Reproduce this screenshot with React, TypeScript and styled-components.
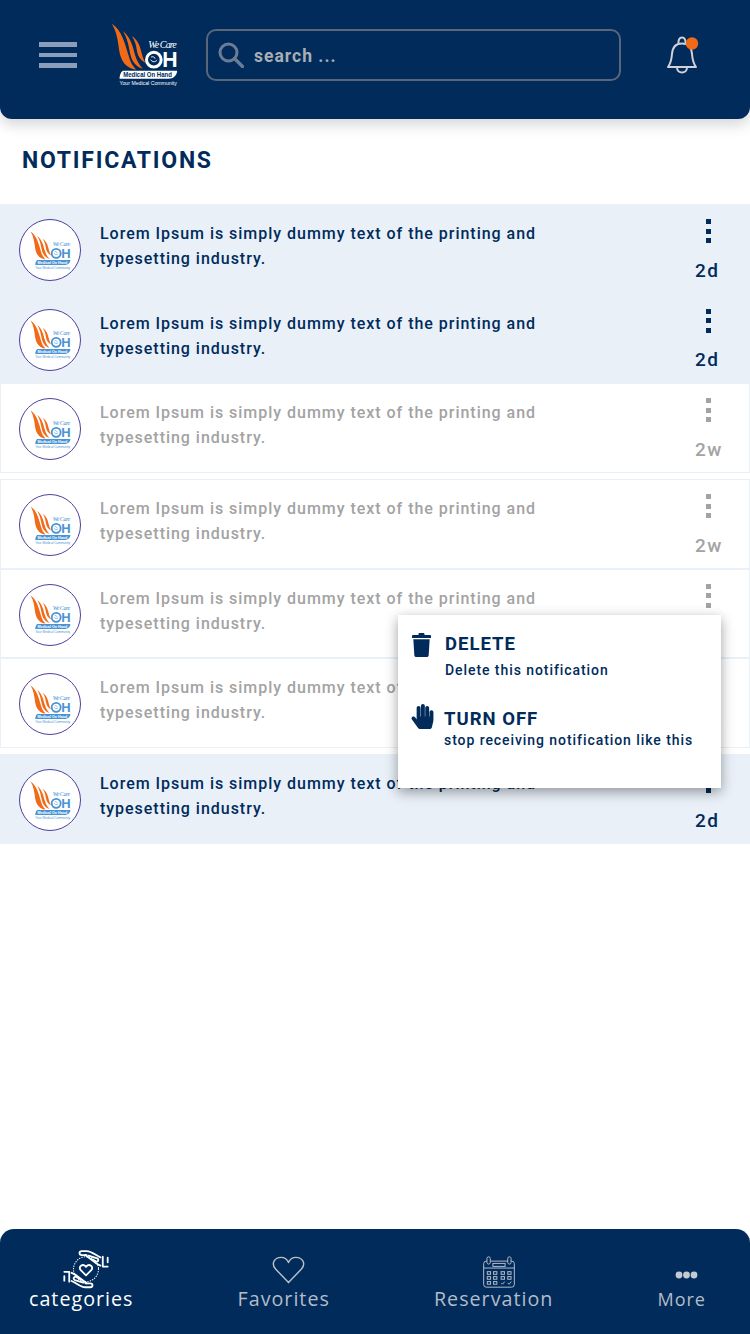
import React from "react";
import styled, { createGlobalStyle } from "styled-components";
import { FaHandPaper } from "react-icons/fa";

const NAVY = "#002B5B";
const TINT = "#E9F0F8";
const MUTED = "#A3A3A3";
const ORANGE = "#F06A17";
const DIN = '"Roboto", "Liberation Sans", sans-serif';
const HUMANIST = '"Open Sans", "Noto Sans", sans-serif';

const Global = createGlobalStyle`
  html, body { margin: 0; padding: 0; background: #fff; }
  * { box-sizing: border-box; }
`;

const Page = styled.div`
  width: 750px;
  height: 1334px;
  display: flex;
  flex-direction: column;
  overflow: hidden;
  font-family: ${DIN};
  background: #fff;
`;

const Header = styled.header`
  flex: none;
  height: 119px;
  padding: 0 0 9px 39px;
  display: flex;
  align-items: center;
  background: ${NAVY};
  border-radius: 0 0 12px 12px;
  box-shadow: 0 6px 14px rgba(0, 0, 0, 0.16);
  position: relative;
`;

const Burger = styled.div`
  width: 38px;
  display: flex;
  flex-direction: column;
  gap: 5.5px;
`;

const BurgerBar = styled.span`
  display: block;
  height: 4.7px;
  background: #8a9dba;
`;

const HeaderLogo = styled.div`
  margin-left: 34px;
  width: 67px;
  height: 64px;
  display: flex;
`;

const SearchBox = styled.div`
  margin-left: 28px;
  width: 415px;
  height: 52px;
  padding-left: 10px;
  display: flex;
  align-items: center;
  gap: 10px;
  border: 2px solid #596779;
  border-radius: 10px;
`;

const SearchText = styled.span`
  margin-top: 1px;
  font-size: 17.5px;
  font-weight: 700;
  letter-spacing: 1px;
  color: #a9aeb5;
`;

const BellWrap = styled.div`
  margin-left: 46px;
  display: flex;
`;

const Title = styled.h1`
  flex: none;
  height: 85px;
  margin: 0;
  padding: 26px 0 0 22px;
  font-size: 23px;
  line-height: 32px;
  font-weight: 700;
  letter-spacing: 1.75px;
  color: ${NAVY};
`;

const List = styled.main`
  flex: 1;
  position: relative;
  display: flex;
  flex-direction: column;
`;

const Row = styled.article<{ $unread?: boolean; $gap?: boolean }>`
  flex: none;
  height: 89.7px;
  margin-top: ${(p) => (p.$gap ? "6px" : "0")};
  display: flex;
  align-items: flex-start;
  background: ${(p) => (p.$unread ? TINT : "#fff")};
  border: ${(p) => (p.$unread ? "none" : `1px solid ${TINT}`)};
  color: ${(p) => (p.$unread ? NAVY : MUTED)};
  padding-top: ${(p) => (p.$unread ? "15px" : "14px")};
  padding-left: ${(p) => (p.$unread ? "19px" : "18px")};
`;

const Avatar = styled.div`
  flex: none;
  width: 62px;
  height: 62px;
  border-radius: 50%;
  border: 1px solid #4d3f9f;
  background: #fff;
  display: flex;
  align-items: center;
  justify-content: center;
`;

const Message = styled.p`
  flex: none;
  width: 450px;
  margin: 2px 0 0 19px;
  font-size: 16px;
  line-height: 25px;
  letter-spacing: 0.97px;
  font-weight: 500;
`;

const Meta = styled.div`
  margin-left: 145px;
  display: flex;
  flex-direction: column;
  align-items: flex-start;
`;

const Dots = styled.div`
  margin-left: 11px;
  display: flex;
  flex-direction: column;
  gap: 4.5px;
`;

const Dot = styled.span`
  display: block;
  width: 5px;
  height: 5px;
  background: currentColor;
`;

const Age = styled.span`
  margin-top: 14.5px;
  font-size: 19px;
  line-height: 26px;
  font-weight: 500;
  letter-spacing: 1.5px;
`;

const Menu = styled.aside`
  position: absolute;
  left: 398px;
  top: 411px;
  width: 323px;
  height: 173px;
  padding: 17px 12px 0 12px;
  background: #fff;
  box-shadow: 0 4px 12px rgba(0, 0, 0, 0.38);
  display: flex;
  flex-direction: column;
  gap: 28px;
  color: ${NAVY};
`;

const MenuItem = styled.div<{ $tight?: boolean }>`
  display: flex;
  align-items: flex-start;
  gap: ${(p) => (p.$tight ? "9px" : "14px")};
  margin-left: ${(p) => (p.$tight ? "0" : "2px")};
`;

const MenuIcon = styled.div<{ $top: number }>`
  flex: none;
  display: flex;
  margin-top: ${(p) => p.$top}px;
`;

const MenuText = styled.div<{ $tight?: boolean }>`
  display: flex;
  flex-direction: column;
  gap: ${(p) => (p.$tight ? "0" : "5px")};
`;

const MenuTitle = styled.strong`
  font-size: 18.5px;
  line-height: 24px;
  font-weight: 700;
  letter-spacing: 1px;
`;

const MenuHint = styled.span`
  font-size: 14px;
  line-height: 18px;
  font-weight: 500;
  letter-spacing: 0.93px;
  white-space: nowrap;
`;

const TabBar = styled.nav`
  flex: none;
  height: 105px;
  padding: 22px 44px 0 29px;
  display: flex;
  justify-content: space-between;
  align-items: flex-start;
  background: ${NAVY};
  border-radius: 14px 14px 0 0;
`;

const Tab = styled.div<{ $active?: boolean }>`
  display: flex;
  flex-direction: column;
  align-items: center;
  color: ${(p) => (p.$active ? "#fff" : "#b4bcc7")};
`;

const TabIcon = styled.div<{ $lift?: number }>`
  height: 38px;
  margin-left: 10px;
  padding-bottom: ${(p) => p.$lift ?? 0}px;
  display: flex;
  align-items: flex-end;
`;

const TabLabel = styled.span<{ $small?: boolean }>`
  font-family: ${HUMANIST};
  font-size: ${(p) => (p.$small ? "18px" : "19.7px")};
  line-height: 20px;
  letter-spacing: 1px;
  white-space: nowrap;
`;

const Logo = ({ onNavy, width, height }: { onNavy?: boolean; width: number; height: number }) => {
  const ink = onNavy ? "#ffffff" : "#4a93d4";
  const pillText = onNavy ? NAVY : "#ffffff";
  return (
    <svg width={width} height={height} viewBox="333 68 200 192">
      <g fill={ORANGE}>
        <path d="M335 70C365 90 375 130 385 165C390 185 398 198 408 208C380 205 362 185 357 150C353 120 350 95 335 70Z" />
        <path d="M368 92C392 110 398 140 405 165C410 182 418 195 428 205C410 200 395 185 390 160C385 135 382 115 368 92Z" />
        <path d="M395 107C415 120 420 140 425 160C428 172 432 180 436 188C420 180 412 165 410 150C408 135 405 122 395 107Z" />
      </g>
      <text x="444" y="144" fontFamily='"Liberation Serif", serif' fontStyle="italic" fontSize="30" fill={ink} textLength="86" lengthAdjust="spacing">
        We Care
      </text>
      <circle cx="461" cy="178" r="22" fill="none" stroke={ink} strokeWidth="9" />
      <path d="M451 178c6 8 14 8 20 1M453 170c6-2 10 0 12 5" fill="none" stroke={ink} strokeWidth="3" />
      <text x="486" y="201" fontFamily='"Liberation Sans", sans-serif' fontWeight="700" fontSize="64" fill={ink} textLength="46" lengthAdjust="spacingAndGlyphs">
        H
      </text>
      <path d="M368 211H531C530 225 520 235 505 235H358C358 225 362 215 368 211Z" fill={ink} />
      <text x="369" y="229" fontFamily='"Liberation Sans", sans-serif' fontWeight="700" fontSize="19" fill={pillText} textLength="146" lengthAdjust="spacingAndGlyphs">
        Medical On Hand
      </text>
      <text x="358" y="253" fontFamily='"Liberation Sans", sans-serif' fontSize="14" fill={ink} textLength="172" lengthAdjust="spacingAndGlyphs">
        Your Medical Community
      </text>
    </svg>
  );
};

const SearchIcon = () => (
  <svg width="26" height="26" viewBox="0 0 26 26" fill="none" stroke="#6b7d94">
    <circle cx="10.5" cy="10.5" r="8.5" strokeWidth="3" />
    <path d="M16.5 16.5L24.5 24.5" strokeWidth="3.4" strokeLinecap="round" />
  </svg>
);

const BellIcon = () => (
  <svg width="32" height="38" viewBox="0 0 32 38" fill="none" stroke="#cfd2d6" strokeWidth="2">
    <path d="M1 31H29C26 27 25.5 24 25 18C24.5 11 21 7.5 15 7.5C9 7.5 5.5 11 5 18C4.5 24 4 27 1 31Z" strokeLinejoin="round" />
    <path d="M11.5 8C11 4 12.5 1.5 15 1.5C17.5 1.5 19 4 18.5 8" />
    <path d="M10 31.5C10 38 20 38 20 31.5" />
    <circle cx="25" cy="7.5" r="6.2" fill={ORANGE} stroke="none" />
  </svg>
);

const TrashIcon = () => (
  <svg width="19" height="24" viewBox="0 0 19 24" fill={NAVY}>
    <path d="M6.5 1.2C6.5.5 7 0 7.7 0h3.6c.7 0 1.2.5 1.2 1.2V2h5.6c.5 0 .9.4.9.9V5H0V2.9C0 2.4.4 2 .9 2h5.6z" />
    <path d="M1.3 6.2h16.4L16.7 22.2c-.1 1-.9 1.8-2 1.8H4.3c-1.1 0-1.9-.8-2-1.8z" />
  </svg>
);

const HandsIcon = () => (
  <svg width="46" height="39" viewBox="190 95 140 118" fill="none" stroke="#fff" strokeLinejoin="round" strokeLinecap="round">
    <circle cx="260" cy="153" r="38" strokeWidth="3.5" strokeDasharray="1 6.5" />
    <path d="M260 172L244 156C235 145 250 134 260 146C270 134 285 145 276 156Z" strokeWidth="5.5" />
    {[0, 180].map((a) => (
      <g key={a} transform={`rotate(${a} 260 153)`} strokeWidth="5.5">
        <path d="M304 117C290 112 278 98 262 98H247C238 98 238 110 247 110H262" />
        <path d="M258 110C268 118 282 128 292 136C296 139 304 142 304 142" />
        <path d="M268 112L294 120C301 124 296 133 289 129L276 122" />
        <path d="M311 115V145H326" />
        <path d="M326 118V132" />
      </g>
    ))}
  </svg>
);

const HeartIcon = () => (
  <svg width="33" height="28" viewBox="820 106 102 86" fill="none" stroke="#b9bfc8" strokeWidth="4.5" strokeLinejoin="round">
    <path d="M871 188L831 146C815 127 830 110 848 110C860 110 868 118 871 126C874 118 882 110 894 110C912 110 927 127 911 146Z" />
  </svg>
);

const CalendarIcon = () => {
  const cols = [343, 362, 385, 405];
  const rows = [158, 173, 188];
  return (
    <svg width="32" height="32" viewBox="325 107 97 96" fill="none" stroke="#b4bcc7" strokeWidth="3">
      <rect x="327" y="122" width="93" height="79" rx="8" />
      <path d="M327 143H420" />
      <rect x="337" y="109" width="10" height="22" rx="5" fill={NAVY} />
      <rect x="400" y="109" width="10" height="22" rx="5" fill={NAVY} />
      <rect x="355" y="129" width="37" height="9" />
      {rows.map((y, r) =>
        cols.map((x, c) =>
          r === 2 && c > 1 ? (
            <path key={`${r}${c}`} d={`M${x - 5} ${y}l4 4 7-8`} />
          ) : (
            <rect key={`${r}${c}`} x={x - 5} y={y - 4} width="10" height="8" />
          )
        )
      )}
    </svg>
  );
};

const MoreIcon = () => (
  <svg width="23" height="8" viewBox="0 0 23 8" fill="#c4cad2">
    <circle cx="4" cy="4" r="3.4" />
    <circle cx="11.5" cy="4" r="3.4" />
    <circle cx="19" cy="4" r="3.4" />
  </svg>
);

const rows = [
  { unread: true, age: "2d" },
  { unread: true, age: "2d" },
  { unread: false, age: "2w" },
  { unread: false, age: "2w", gap: true },
  { unread: false, age: "2w" },
  { unread: false, age: "2w" },
  { unread: true, age: "2d", gap: true },
];

export default function App() {
  return (
    <Page>
      <Global />
      <Header>
        <Burger>
          <BurgerBar />
          <BurgerBar />
          <BurgerBar />
        </Burger>
        <HeaderLogo>
          <Logo onNavy width={67} height={64} />
        </HeaderLogo>
        <SearchBox>
          <SearchIcon />
          <SearchText>search ...</SearchText>
        </SearchBox>
        <BellWrap>
          <BellIcon />
        </BellWrap>
      </Header>
      <Title>NOTIFICATIONS</Title>
      <List>
        {rows.map((r, i) => (
          <Row key={i} $unread={r.unread} $gap={r.gap}>
            <Avatar>
              <Logo width={41} height={39} />
            </Avatar>
            <Message>Lorem Ipsum is simply dummy text of the printing and typesetting industry.</Message>
            <Meta>
              <Dots>
                <Dot />
                <Dot />
                <Dot />
              </Dots>
              <Age>{r.age}</Age>
            </Meta>
          </Row>
        ))}
        <Menu>
          <MenuItem>
            <MenuIcon $top={1}>
              <TrashIcon />
            </MenuIcon>
            <MenuText>
              <MenuTitle>DELETE</MenuTitle>
              <MenuHint>Delete this notification</MenuHint>
            </MenuText>
          </MenuItem>
          <MenuItem $tight>
            <MenuIcon $top={-3}>
              <FaHandPaper size={25} />
            </MenuIcon>
            <MenuText $tight>
              <MenuTitle>TURN OFF</MenuTitle>
              <MenuHint>stop receiving notification like this</MenuHint>
            </MenuText>
          </MenuItem>
        </Menu>
      </List>
      <TabBar>
        <Tab $active>
          <TabIcon>
            <HandsIcon />
          </TabIcon>
          <TabLabel>categories</TabLabel>
        </Tab>
        <Tab>
          <TabIcon $lift={5}>
            <HeartIcon />
          </TabIcon>
          <TabLabel>Favorites</TabLabel>
        </Tab>
        <Tab>
          <TabIcon $lift={1}>
            <CalendarIcon />
          </TabIcon>
          <TabLabel>Reservation</TabLabel>
        </Tab>
        <Tab>
          <TabIcon $lift={10}>
            <MoreIcon />
          </TabIcon>
          <TabLabel $small>More</TabLabel>
        </Tab>
      </TabBar>
    </Page>
  );
}
